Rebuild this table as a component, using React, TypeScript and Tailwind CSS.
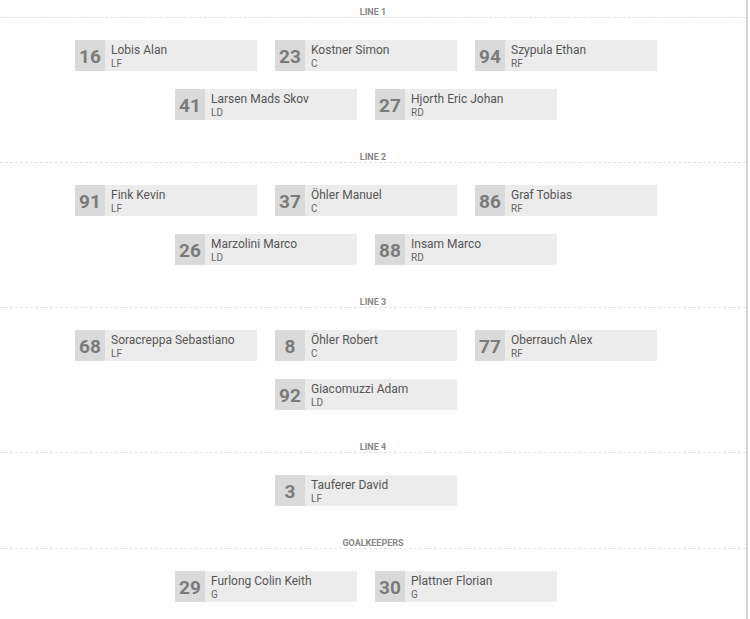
import React from "react"

type Player = { num: number; name: string; pos: string }

const lines: { title: string; rows: Player[][] }[] = [
  {
    title: "Line 1",
    rows: [
      [
        { num: 16, name: "Lobis Alan", pos: "LF" },
        { num: 23, name: "Kostner Simon", pos: "C" },
        { num: 94, name: "Szypula Ethan", pos: "RF" },
      ],
      [
        { num: 41, name: "Larsen Mads Skov", pos: "LD" },
        { num: 27, name: "Hjorth Eric Johan", pos: "RD" },
      ],
    ],
  },
  {
    title: "Line 2",
    rows: [
      [
        { num: 91, name: "Fink Kevin", pos: "LF" },
        { num: 37, name: "Öhler Manuel", pos: "C" },
        { num: 86, name: "Graf Tobias", pos: "RF" },
      ],
      [
        { num: 26, name: "Marzolini Marco", pos: "LD" },
        { num: 88, name: "Insam Marco", pos: "RD" },
      ],
    ],
  },
  {
    title: "Line 3",
    rows: [
      [
        { num: 68, name: "Soracreppa Sebastiano", pos: "LF" },
        { num: 8, name: "Öhler Robert", pos: "C" },
        { num: 77, name: "Oberrauch Alex", pos: "RF" },
      ],
      [{ num: 92, name: "Giacomuzzi Adam", pos: "LD" }],
    ],
  },
  {
    title: "Line 4",
    rows: [[{ num: 3, name: "Tauferer David", pos: "LF" }]],
  },
  {
    title: "Goalkeepers",
    rows: [
      [
        { num: 29, name: "Furlong Colin Keith", pos: "G" },
        { num: 30, name: "Plattner Florian", pos: "G" },
      ],
    ],
  },
]

const PlayerCard = ({ p }: { p: Player }) => (
  <div className="flex w-[182px] h-[31px] bg-[#ececec]">
    <div className="w-[30px] h-full bg-[#dadada] flex items-center justify-center pt-[1px] text-[19px] font-bold text-[#7a7a7a] leading-none">
      {p.num}
    </div>
    <div className="flex flex-col pl-[6px] pt-[3px]">
      <div className="text-[12px] leading-[15px] text-[#555]">{p.name}</div>
      <div className="text-[10px] leading-[12px] text-[#666]">{p.pos}</div>
    </div>
  </div>
)

export default function App() {
  return (
    <div
      className="w-[750px] h-[619px] bg-white overflow-hidden flex"
      style={{ fontFamily: "Roboto, 'Liberation Sans', sans-serif" }}
    >
      <div className="w-[746px]">
        {lines.map((line) => (
          <div key={line.title} className="pb-[25px]">
            <div className="pt-[8px] h-[18px] border-b border-dashed border-[#e2e2e2] text-center text-[9px] leading-[9px] font-bold uppercase text-[#888]">
              <span className="inline-block w-[732px]">{line.title}</span>
            </div>
            <div className="w-[732px] pt-[22px] flex flex-col gap-[18px]">
              {line.rows.map((row, i) => (
                <div key={i} className="flex justify-center gap-[18px]">
                  {row.map((p) => (
                    <PlayerCard key={p.num} p={p} />
                  ))}
                </div>
              ))}
            </div>
          </div>
        ))}
      </div>
      <div className="w-[2px] h-full bg-[#d8d8d8]" />
    </div>
  )
}
